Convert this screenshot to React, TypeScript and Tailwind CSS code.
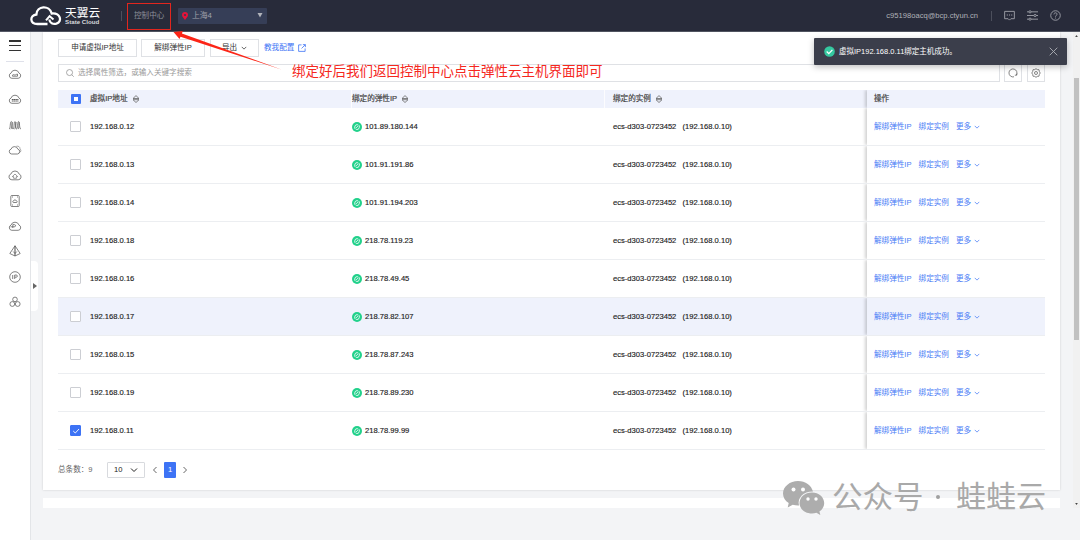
import { useState } from 'react';
import type { ReactNode } from 'react';
import clsx from 'clsx';

const rows = [
  { ip: '192.168.0.12', eip: '101.89.180.144' },
  { ip: '192.168.0.13', eip: '101.91.191.86' },
  { ip: '192.168.0.14', eip: '101.91.194.203' },
  { ip: '192.168.0.18', eip: '218.78.119.23' },
  { ip: '192.168.0.16', eip: '218.78.49.45' },
  { ip: '192.168.0.17', eip: '218.78.82.107' },
  { ip: '192.168.0.15', eip: '218.78.87.243' },
  { ip: '192.168.0.19', eip: '218.78.89.230' },
  { ip: '192.168.0.11', eip: '218.78.99.99' },
];

const cloud = 'M3.800 11.300a2.700 2.700 0 0 1-.8-5.200 4.200 4.200 0 0 1 8 0 2.700 2.700 0 0 1-.8 5.200z';

const navIcons: ReactNode[] = [
  <><path d={cloud} /><path d="M4.500 9.200c-.3-1.700.6-1.700 1.700-1.300 1.400.5 2-.8 3.300-.8v2.100z" /></>,
  <><path d={cloud} /><path d="M3.800 7.500h6.600M3.800 9h6.600" strokeWidth="1.100" strokeDasharray="1.500 .3" /></>,
  <path d="M1 11c1.800 0 .8-7.500 2.300-7.500S3.500 11 5 11s.7-7.500 2-7.500S7.200 11 8.600 11s.7-7.500 2-7.500S11 11 13 11M2.800 11c1.400 0 .7-6 2-6.800M6.500 11c1.400 0 .7-6 2-6.800M10 11c1.400 0 .5-6 1.300-6.800" />,
  <><path d="M3.600 11a2.500 2.500 0 0 1-.5-4.900 3.500 3.500 0 0 1 6.700 0A2.500 2.500 0 0 1 9.500 11z" /><path d="M8.300 3.300c2.200-.7 4 .8 3.700 2.700 1.400.9 1.200 2.900-.6 3.600" strokeWidth=".5" /></>,
  <><path d="M3.800 11.800a3 3 0 0 1-.9-5.800 4.300 4.300 0 0 1 8.200 0 3 3 0 0 1-.9 5.800z" /><path d="M5.600 10.300V8.600H4.300L7 6l2.700 2.600H8.400v1.700z" strokeWidth=".6" /></>,
  <><rect x="2.800" y="1.500" width="8.400" height="11" rx="1" /><path d="M5.400 8.500c-1-.2-.8-1.500.1-1.600.4-1.400 2.500-1.400 2.900 0 1.100.2 1 1.600.1 1.600zM4 3h1M9 3h1M4 11h1M9 11h1" /></>,
  <><path d={cloud} /><path d="M4.800 9V5.600h1.500c1.700 0 1.700 2.200 0 2.200H2.500" /></>,
  <><path d="M7 1.800 1.800 9.500 7 12l5.200-2.500z" /><path d="M7 1.800V12" strokeWidth="1.100" /><path d="M5.200 7.500 7 9.500l1.800-2" /></>,
  <><circle cx="7" cy="7" r="5.300" /><path d="M4.700 5v4M6.700 9V5h1.500c1.600 0 1.600 2.200 0 2.200H6.700" /></>,
  <><circle cx="7" cy="4.400" r="2.300" /><circle cx="4.300" cy="9" r="2.400" /><circle cx="9.700" cy="9" r="2.400" /></>,
];

function NavIcon({ children }: { children: ReactNode }) {
  return (
    <svg viewBox="0 0 14 14" className="h-3.5 w-3.5" fill="none" stroke="#5a5a5a" strokeWidth=".75">
      {children}
    </svg>
  );
}

function Chevron({ dir = 'down', className }: { dir?: 'down' | 'left' | 'right'; className?: string }) {
  const d = { down: 'M1 2.500 4 5.500 7 2.500', left: 'M5.500 1 2.500 4 5.500 7', right: 'M2.500 1 5.500 4 2.500 7' }[dir];
  return (
    <svg viewBox="0 0 8 8" className={clsx('shrink-0', className)} fill="none" stroke="currentColor" strokeWidth="1">
      <path d={d} />
    </svg>
  );
}

function SortIcon() {
  return (
    <svg viewBox="0 0 8 8" className="h-2 w-2" fill="none" stroke="#666" strokeWidth=".8">
      <path d="M1 3.500 4 .6l3 2.900zM1 4.700 4 7.500l3-2.800z" />
    </svg>
  );
}

function LinkBadge() {
  return (
    <svg viewBox="0 0 10 10" className="h-2.5 w-2.5">
      <circle cx="5" cy="5" r="5" fill="#22d18b" />
      <path d="M2.800 6.700V4.800a2.200 2.200 0 0 1 3.600-1.600M7.300 3.400v1.900a2.200 2.200 0 0 1-3.700 1.600M4.200 5.800l1.700-1.600" fill="none" stroke="white" strokeWidth=".85" />
    </svg>
  );
}

function Checkbox({ checked, onClick }: { checked: boolean; onClick: () => void }) {
  return (
    <button
      onClick={onClick}
      className={clsx('flex h-[11px] w-[11px] items-center justify-center rounded-[1px] border', checked ? 'border-[#3d73f5] bg-[#3d73f5]' : 'border-[#ccced3] bg-white')}
    >
      {checked && (
        <svg viewBox="0 0 8 8" className="h-2 w-2" fill="none" stroke="white" strokeWidth=".9">
          <path d="M1.200 4 3.300 6 7 2" />
        </svg>
      )}
    </button>
  );
}

function Header() {
  return (
    <header className="flex h-8 items-center border-b border-[#555966] bg-[#282b3a] text-[#a0a2aa]">
      <svg viewBox="0 0 32 20" className="ml-[30px] h-5 w-8" fill="none" stroke="white" strokeWidth="2.300">
        <path d="M17.500 18H7.500C-.500 18-.500 9.300 6.400 8.500 6.700-.200 19.500-1.200 21.700 7.500c8.500-.8 11.300 7.800 4.700 10.100-3.200 1-6.900-.5-7-4.100" />
        <path d="m16 14.300 3.600-4.100 3.900 3.300" strokeWidth="2" />
      </svg>
      <div className="ml-[3px] mt-px flex w-[37px] flex-col text-white">
        <span className="whitespace-nowrap text-[11.700px] leading-[12px]">天翼云</span>
        <span className="whitespace-nowrap text-[6.200px] font-bold leading-[6px] text-[#d8d9dd]">State Cloud</span>
      </div>
      <div className="ml-[19px] h-2.5 w-px bg-[#4c4f5c]" />
      <span className="ml-[12px] w-8 whitespace-nowrap text-[7.600px] text-[#8d9099]">控制中心</span>
      <div className="ml-[12px] flex h-4 w-[89px] items-center rounded-[1px] bg-[#363e57] pl-1 pr-1 text-[7.800px]">
        <svg viewBox="0 0 6 8" className="mr-1 h-2 w-1.5">
          <path d="M3 8C1.500 6 0 4.500 0 3a3 3 0 0 1 6 0c0 1.500-1.500 3-3 5z" fill="#e5133a" />
          <circle cx="3" cy="3" r="1.100" fill="#363e57" />
        </svg>
        <span className="flex-1">上海4</span>
        <svg viewBox="0 0 6 5" className="h-[5px] w-1.5"><path d="M.500 0h5L3 4.500z" fill="#b1b3ba" /></svg>
      </div>
      <span className="ml-auto whitespace-nowrap text-[7.600px] text-[#b0b2b8]">c95198oacq@bcp.ctyun.cn</span>
      <div className="ml-[13px] h-2.5 w-px bg-[#4c4f5c]" />
      <div className="ml-[12px] mr-[19px] flex items-center gap-3">
        <svg viewBox="0 0 12 12" className="h-[11px] w-[11px]" fill="none" stroke="#a0a2aa" strokeWidth="1">
          <path d="M.700 1.500h10.600v8H7.500L6 11 4.500 9.500H.700z" />
          <path d="M3 5.500h6" strokeDasharray="1.200 1.200" strokeWidth="1.200" />
        </svg>
        <svg viewBox="0 0 12 12" className="h-[11px] w-[11px]" fill="none" stroke="#a0a2aa" strokeWidth="1">
          <path d="M0 2h2M4.500 2H12M0 6h7.500M10 6h2M0 10h2M4.500 10H12" />
          <circle cx="3.300" cy="2" r="1.200" /><circle cx="8.800" cy="6" r="1.200" /><circle cx="3.300" cy="10" r="1.200" />
        </svg>
        <svg viewBox="0 0 12 12" className="h-[11px] w-[11px]" fill="none" stroke="#a0a2aa" strokeWidth="1">
          <circle cx="6" cy="6" r="5.200" />
          <path d="M4.300 4.800c0-2.300 3.400-2.200 3.400-.2C7.700 5.800 6 5.900 6 7.300M6 8.300v1" />
        </svg>
      </div>
    </header>
  );
}

function Sidebar() {
  return (
    <aside className="flex w-[31px] shrink-0 flex-col items-center border-r border-[#e3e5e8] bg-white">
      <div className="mt-2 flex h-[11px] w-3 flex-col justify-between">
        <div className="h-[1.500px] bg-[#333]" />
        <div className="h-[1.500px] bg-[#333]" />
        <div className="h-[1.500px] bg-[#333]" />
      </div>
      <div className="mt-[10px] h-px w-[18px] bg-[#dfe1ea]" />
      <div className="mt-[5px] flex flex-col gap-[11.350px]">
        {navIcons.map((icon, i) => (
          <NavIcon key={i}>{icon}</NavIcon>
        ))}
      </div>
    </aside>
  );
}

function Toolbar() {
  return (
    <>
      <div className="flex items-center gap-1">
        <button className="flex h-[18px] w-[79px] items-center justify-center whitespace-nowrap border border-[#dfe1e5] bg-white">申请虚拟IP地址</button>
        <button className="flex h-[18px] w-[64px] items-center justify-center whitespace-nowrap border border-[#dfe1e5] bg-white">解绑弹性IP</button>
        <button className="ml-px flex h-[18px] w-[49px] items-center justify-center gap-1 whitespace-nowrap border border-[#dfe1e5] bg-white">
          导出
          <Chevron className="h-1.5 w-1.5" />
        </button>
        <a className="ml-px flex items-center gap-1 text-[#3d73f5]">
          教我配置
          <svg viewBox="0 0 9 9" className="h-2 w-2" fill="none" stroke="currentColor" strokeWidth=".9">
            <path d="M4 1H.700v7.300H8V5M5.500.700h2.800v2.800M8.200.800 4 5" />
          </svg>
        </a>
      </div>
      <div className="mt-[7px] flex h-[18px]">
        <div className="flex w-[942px] items-center border border-[#dfe1e5] pl-[7px] text-[#999]">
          <svg viewBox="0 0 9 9" className="mr-[4px] h-2 w-2" fill="none" stroke="#888" strokeWidth=".8">
            <circle cx="4" cy="4" r="3.400" /><path d="m6.500 6.500 2.200 2.200" />
          </svg>
          选择属性筛选，或输入关键字搜索
        </div>
        <button className="ml-1 flex w-[18px] items-center justify-center border border-[#dfe1e5]">
          <svg viewBox="0 0 10 10" className="h-2.5 w-2.5" fill="none" stroke="#666" strokeWidth=".8">
            <path d="M6 8.800A4 4 0 1 1 8.400 7M6.800 7.200h2V5.500" />
          </svg>
        </button>
        <button className="ml-[5px] flex w-[18px] items-center justify-center border border-[#dfe1e5]">
          <svg viewBox="0 0 10 10" className="h-2.5 w-2.5" fill="none" stroke="#666" strokeWidth=".8">
            <path d="m5 .700 1.300.9 1.700.1.300 1.700L9.200 5l-.9 1.500L8 8.200l-1.700.2L5 9.300l-1.300-.9L2 8.200l-.3-1.700L.800 5l.9-1.600L2 1.700l1.700-.1z" />
            <circle cx="5" cy="5" r="1.500" />
          </svg>
        </button>
      </div>
    </>
  );
}

const cols = 'grid grid-cols-[32px_261px_253px_263px_178px]';
const actionEdge = 'flex h-full items-center pl-[7px] shadow-[-2px_0_3px_rgba(0,0,0,0.18)] [clip-path:inset(0_0_0_-6px)]';

function Table() {
  const [selected, setSelected] = useState<string[]>(['192.168.0.11']);

  const toggle = (ip: string) => {
    setSelected(selected.includes(ip) ? selected.filter(s => s !== ip) : [...selected, ip]);
  };

  return (
    <div className="mt-2 w-[987px]">
      <div className={clsx(cols, 'h-[18px] items-center bg-[#eff2fc] text-[#444] [-webkit-text-stroke:0.2px]')}>
        <div className="pl-[13px]">
          <div className="flex h-2.5 w-2.5 items-center justify-center rounded-[1px] bg-[#3d73f5]">
            <div className="h-1 w-1 bg-white" />
          </div>
        </div>
        <div className="flex items-center gap-1">虚拟IP地址 <SortIcon /></div>
        <div className="flex h-full items-center gap-1 border-l border-white/80">绑定的弹性IP <SortIcon /></div>
        <div className="flex h-full items-center gap-1 border-l border-white/80 pl-2">绑定的实例 <SortIcon /></div>
        <div className={actionEdge}>操作</div>
      </div>
      {rows.map(row => (
        <div
          key={row.ip}
          className={clsx(cols, 'h-[38px] items-center border-b border-[#eceef1] text-[#222]', row.ip === '192.168.0.17' && 'bg-[#eff2fc]')}
        >
          <div className="flex pl-3">
            <Checkbox checked={selected.includes(row.ip)} onClick={() => toggle(row.ip)} />
          </div>
          <div className="[-webkit-text-stroke:0.15px]">{row.ip}</div>
          <div className="flex items-center gap-[3px] pl-px [-webkit-text-stroke:0.15px]"><LinkBadge />{row.eip}</div>
          <div className="flex pl-[9px] [-webkit-text-stroke:0.15px]"><span className="w-[69.500px]">ecs-d303-0723452</span>(192.168.0.10)</div>
          <div className={clsx(actionEdge, 'gap-[7px] whitespace-nowrap text-[#4a7cf6]')}>
            <a>解绑弹性IP</a>
            <a>绑定实例</a>
            <a className="flex items-center gap-[3px]">更多 <Chevron className="h-1.5 w-1.5" /></a>
          </div>
        </div>
      ))}
    </div>
  );
}

function Pagination() {
  return (
    <div className="mt-3 flex h-4 items-center text-[#666]">
      <span className="w-[49px]">总条数：9</span>
      <div className="flex h-4 w-[38px] items-center justify-between rounded-[1px] border border-[#d8dade] pl-1.5 pr-1.5 text-[#222]">
        10 <Chevron className="h-2 w-2" />
      </div>
      <Chevron dir="left" className="ml-[6px] h-2 w-2" />
      <div className="ml-[5px] flex h-4 w-3 items-center justify-center rounded-[1px] bg-[#3d73f5] text-white">1</div>
      <Chevron dir="right" className="ml-[5px] h-2 w-2" />
    </div>
  );
}

function Toast() {
  return (
    <div className="absolute left-[814px] top-[38px] flex h-[27px] w-[253px] items-center rounded-[1px] bg-[#3b3e4b] pl-[10px] pr-[9px] text-[7.500px] text-white shadow-[0_2px_6px_rgba(0,0,0,0.25)]">
      <svg viewBox="0 0 11 11" className="mr-[4px] h-[11px] w-[11px]">
        <circle cx="5.500" cy="5.500" r="5.300" fill="#34c9a0" />
        <path d="m2.700 5.500 2.100 2.100 3.600-3.700" fill="none" stroke="white" strokeWidth="1.300" />
      </svg>
      <span className="flex-1 whitespace-nowrap">虚拟IP192.168.0.11绑定主机成功。</span>
      <svg viewBox="0 0 9 9" className="h-[9px] w-[9px]" stroke="#aeb0b6" strokeWidth=".9">
        <path d="m.700.700 7.600 7.600M8.300.700.700 8.300" />
      </svg>
    </div>
  );
}

function Annotation() {
  return (
    <>
      <div className="absolute left-[127px] top-[3px] h-[27px] w-[44px] border-[1.500px] border-[#e2261e]" />
      <svg viewBox="0 0 110 42" className="absolute left-[172px] top-[30px] h-[42px] w-[110px]">
        <path d="M1.500 2 10.800.900 9.900 3.400 110 39.700 8.500 6.800 7.500 9z" fill="#fc2517" />
      </svg>
      <p className="absolute left-[292px] top-[62px] whitespace-nowrap text-[13.500px] leading-5 text-[#f5281e]">
        绑定好后我们返回控制中心点击弹性云主机界面即可
      </p>
    </>
  );
}

function Watermark() {
  return (
    <div className="absolute left-[783px] top-[475px] flex h-11 items-center text-[#a9a9a9]">
      <svg viewBox="0 0 42 35" className="h-[35px] w-[42px]">
        <path d="M15 1C7 1 0 6.500 0 13.500c0 4 2.200 7.300 5.700 9.600L4.700 27.500l5-2.700c2 .6 4 .9 6.300.8-2-8 5-14.300 14-14C28.500 5.500 22.500 1 15 1z" fill="#adadad" />
        <path d="M29 12.500c-7 0-12.500 4.600-12.500 10.600S22 33.500 29 33.500c1.500 0 3-.2 4.400-.7l4 2.200-1-3.500c3-2 4.800-4.900 4.800-8.400 0-6-5.500-10.600-12.200-10.600z" fill="#adadad" />
        <g fill="white"><circle cx="10.500" cy="9.500" r="2" /><circle cx="20" cy="9.500" r="2" /><circle cx="25" cy="19" r="1.700" /><circle cx="33" cy="19" r="1.700" /></g>
      </svg>
      <span className="ml-[7px] w-[92px] whitespace-nowrap text-[30.500px]">公众号</span>
      <span className="ml-[12px] h-1 w-1 rounded-full bg-[#a0a0a0]" />
      <span className="ml-[16px] whitespace-nowrap text-[30px]">蛙蛙云</span>
    </div>
  );
}

export default function App() {
  return (
    <div className="relative flex h-[540px] w-[1080px] flex-col overflow-hidden bg-[#f3f4f6] font-['Liberation_Sans','Noto_Sans_CJK_SC',sans-serif] text-[7.600px] leading-3 text-[#333]">
      <Header />
      <div className="flex min-h-0 flex-1">
        <Sidebar />
        <main className="flex flex-1 flex-col pl-3">
          <section className="h-[458px] w-[1017px] bg-white pl-[15px] pt-[7px] shadow-[0_0_2px_rgba(0,0,0,0.16)]">
            <Toolbar />
            <Table />
            <Pagination />
          </section>
          <section className="mt-2 h-2.5 w-[1017px] bg-white" />
        </main>
        <div className="flex h-[476px] w-[7px] flex-col items-center bg-[#f1f1f1]">
          <svg viewBox="0 0 4 3" className="mt-[3px] h-[2px] w-[3px]"><path d="M0 3 2 0l2 3z" fill="#444" /></svg>
          <div className="mt-[41px] h-[262px] w-[5px] bg-[#c1c1c1]" />
          <svg viewBox="0 0 4 3" className="mb-[3px] mt-auto h-[2px] w-[3px]"><path d="m0 0 2 3 2-3z" fill="#444" /></svg>
        </div>
      </div>
      {/* sidebar expand handle */}
      <button className="absolute left-[31px] top-[261px] flex h-[50px] w-[7px] items-center justify-center rounded-r-[4px] bg-white">
        <svg viewBox="0 0 4 6" className="h-1.5 w-1"><path d="m0 0 4 3-4 3z" fill="#666" /></svg>
      </button>
      <Toast />
      <Annotation />
      <Watermark />
    </div>
  );
}
